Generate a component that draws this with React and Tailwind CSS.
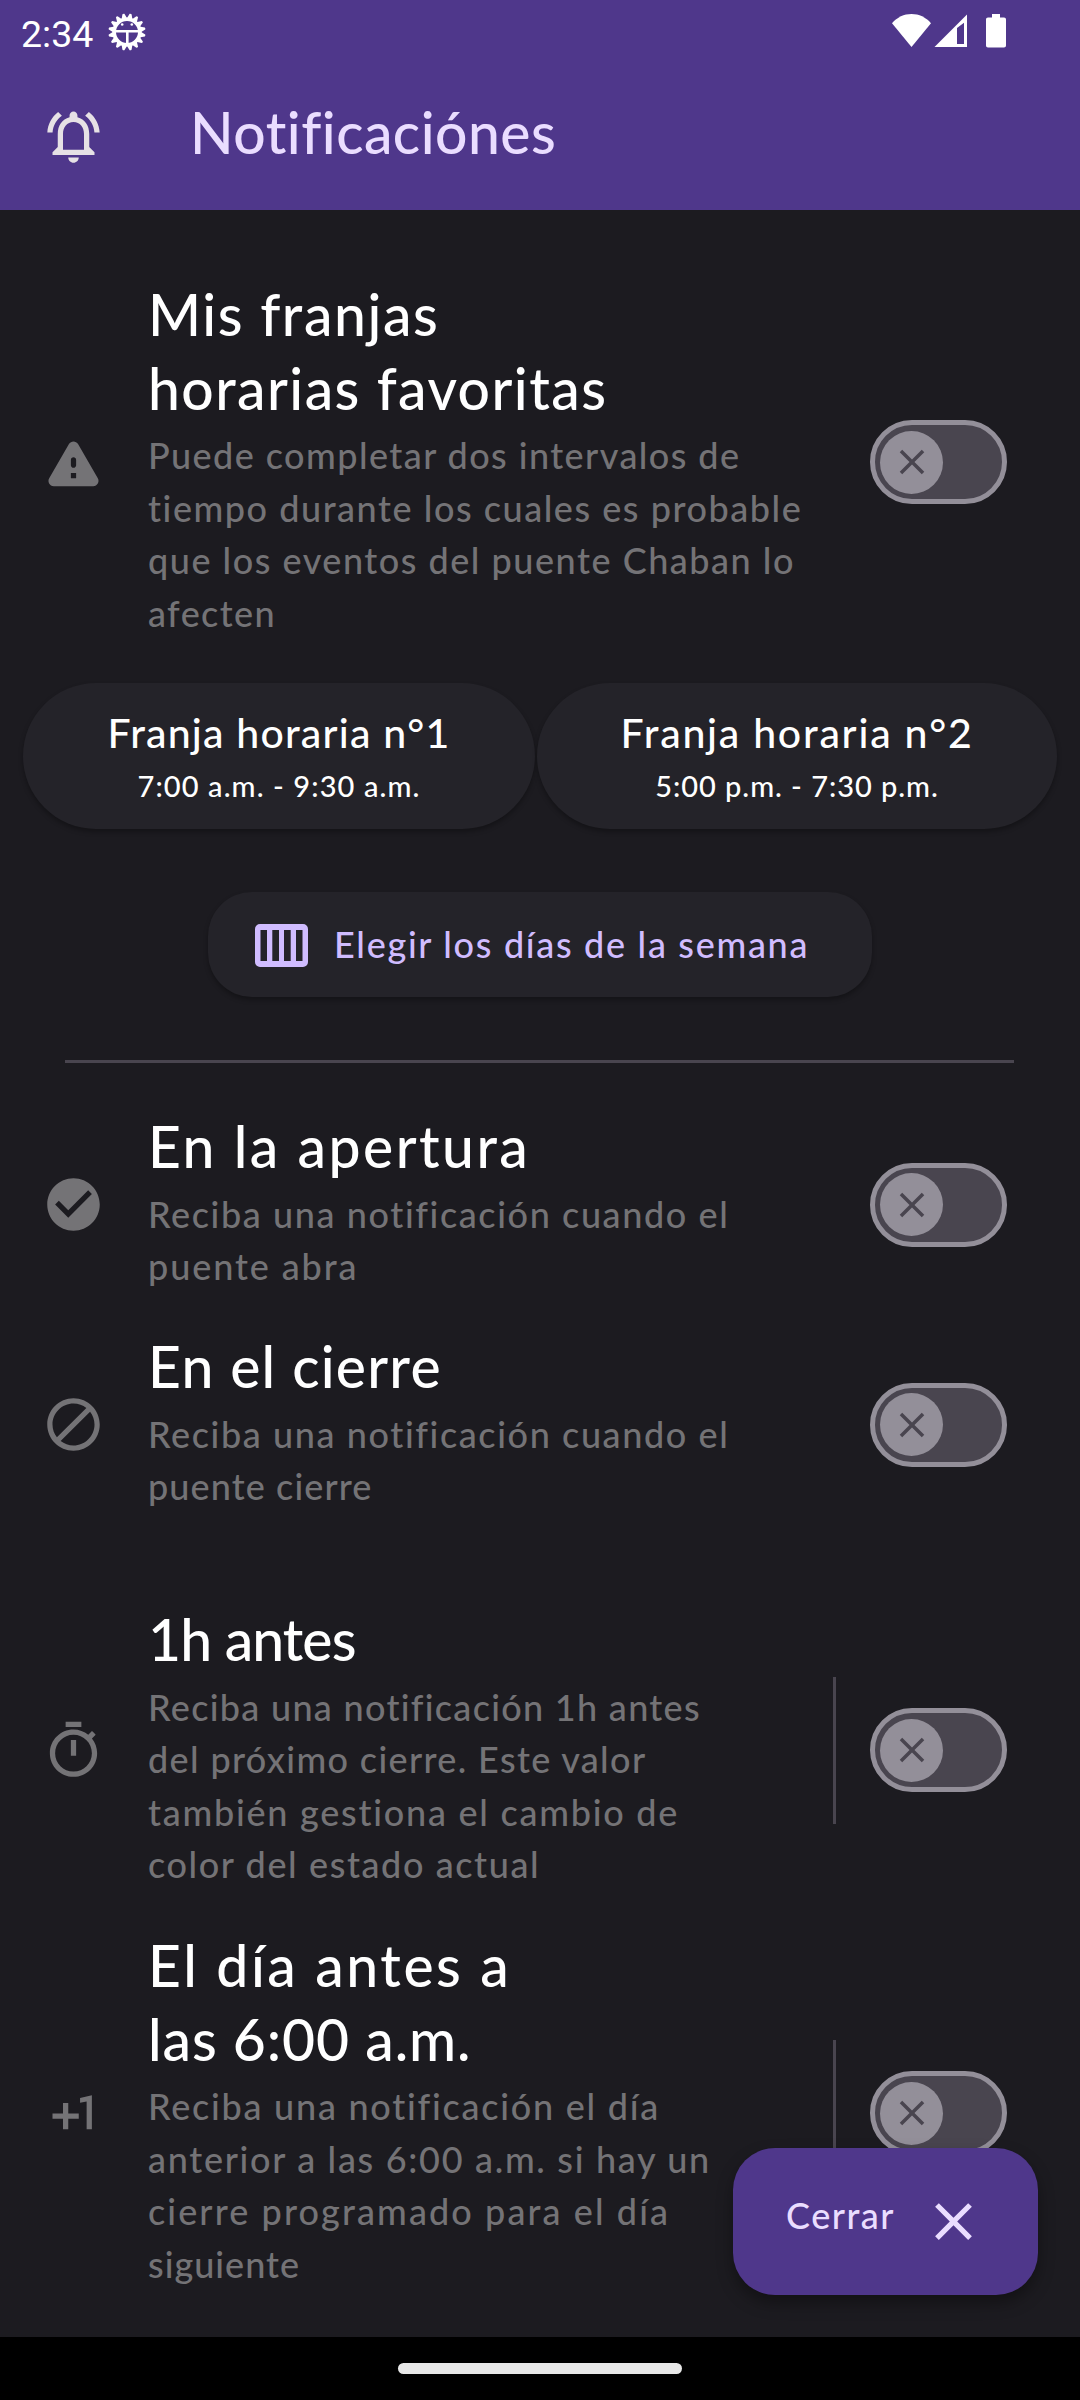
import React from 'react';

const PATHS = {
  bell:
    'M12 22c1.1 0 2-.9 2-2h-4c0 1.1.9 2 2 2zm6-6v-5c0-3.07-1.63-5.64-4.5-6.32V4c0-.83-.67-1.5-1.5-1.5s-1.5.67-1.5 1.5v.68C7.64 5.36 6 7.92 6 11v5l-2 2v1h16v-1l-2-2zm-2 1H8v-6c0-2.48 1.51-4.5 4-4.5s4 2.02 4 4.5v6zM7.58 4.08L6.15 2.65C3.75 4.48 2.17 7.3 2.03 10.5h2c.15-2.65 1.51-4.97 3.55-6.42zm12.39 6.42h2c-.15-3.2-1.73-6.02-4.12-7.85l-1.42 1.43c2.02 1.45 3.39 3.77 3.54 6.42z',
  warning:
    'M4.47 21h15.06c1.54 0 2.5-1.67 1.73-3L13.73 4.99c-.77-1.33-2.69-1.33-3.46 0L2.74 18c-.77 1.33.19 3 1.73 3zM12 14c-.55 0-1-.45-1-1v-2c0-.55.45-1 1-1s1 .45 1 1v2c0 .55-.45 1-1 1zm1 4h-2v-2h2v2z',
  check:
    'M12 2C6.48 2 2 6.48 2 12s4.48 10 10 10 10-4.48 10-10S17.52 2 12 2zm-2 15l-5-5 1.41-1.41L10 14.17l7.59-7.59L19 8l-9 9z',
  block:
    'M12 2C6.48 2 2 6.48 2 12s4.48 10 10 10 10-4.48 10-10S17.52 2 12 2zM4 12c0-4.42 3.58-8 8-8 1.85 0 3.55.63 4.9 1.69L5.69 16.9C4.63 15.55 4 13.85 4 12zm8 8c-1.85 0-3.55-.63-4.9-1.69L18.31 7.1C19.37 8.45 20 10.15 20 12c0 4.42-3.58 8-8 8z',
  timer:
    'M15 1H9v2h6V1zm-4 13h2V8h-2v6zm8.03-6.61l1.42-1.42c-.43-.51-.9-.99-1.41-1.41l-1.42 1.42C16.07 4.74 14.12 4 12 4c-4.97 0-9 4.03-9 9s4.02 9 9 9 9-4.03 9-9c0-2.12-.74-4.07-1.97-5.61zM12 20c-3.87 0-7-3.13-7-7s3.13-7 7-7 7 3.13 7 7-3.13 7-7 7z',
  plusOne: 'M10 8H8v4H4v2h4v4h2v-4h4v-2h-4V8zm4.5-1.92V7.9l2.5-.5V18h2V5l-4.5 1.08z',
  close:
    'M19 6.41L17.59 5 12 10.59 6.41 5 5 6.41 10.59 12 5 17.59 6.41 19 12 13.41 17.59 19 19 17.59 13.41 12 19 6.41z',
};

function Icon({ name, className }) {
  return (
    <svg viewBox="0 0 24 24" fill="currentColor" className={className} aria-hidden="true">
      <path d={PATHS[name]} />
    </svg>
  );
}

function BugGear() {
  return (
    <svg viewBox="0 0 38 38" className="h-[38px] w-[38px]" aria-hidden="true">
      {Array.from({ length: 16 }, (_, i) => (
        <path key={i} d="M16 6 L18 0.6 Q19 0 20 0.6 L22 6z" fill="#fff" transform={`rotate(${i * 22.5 + 11.25} 19 19)`} />
      ))}
      <circle cx="19" cy="19" r="12.8" fill="none" stroke="#fff" strokeWidth="3.6" />
      <path d="M7 18.2h24M19.3 18v14" stroke="#fff" strokeWidth="2.6" />
      <circle cx="14.2" cy="11.5" r="1.3" fill="#fff" />
      <circle cx="23.8" cy="11.5" r="1.3" fill="#fff" />
    </svg>
  );
}

function StatusBar() {
  return (
    <div className="flex h-[63px] items-start pr-[74px] pl-[21px] text-white">
      <span className="mt-[12px] w-[72px] font-[Roboto] text-[37.5px] leading-[44px] font-normal">2:34</span>
      <div className="mt-[13px] ml-[15px]">
        <BugGear />
      </div>
      <svg viewBox="0 0 114 36" className="mt-[13px] ml-auto h-[36px] w-[114px]" fill="#fff" aria-hidden="true">
        <path d="M0 10.2C5.2 4.200 12 1 19.500 1s14.300 3.200 19.500 9.200L19.500 34z" />
        <path fillRule="evenodd" d="M42.500 34 75 1.500V34zM65 14.500V31h7V9.700L65 15z" />
        <path d="M100 1h8v3.500h4c1.200 0 2 .8 2 2v26c0 1.200-.8 2-2 2H96c-1.200 0-2-.8-2-2v-26c0-1.200.8-2 2-2h4z" />
      </svg>
    </div>
  );
}

function Toggle() {
  return (
    <button
      role="switch"
      aria-checked="false"
      className="flex h-[84px] w-[137px] shrink-0 items-center rounded-full border-[5px] border-[#938f99] bg-[#49454f] pl-[5px]"
    >
      <span className="flex h-[63px] w-[63px] items-center justify-center rounded-full bg-[#938f99] text-[#49454f]">
        <Icon name="close" className="h-[42px] w-[42px]" />
      </span>
    </button>
  );
}

function Setting({ icon, title, lines, split, className }) {
  return (
    <div className={`flex items-center pr-[73px] pl-[42px] ${className}`}>
      <Icon name={icon} className="h-[63px] w-[63px] shrink-0 text-[#747376]" />
      <div className="ml-[43px] flex-1 pt-[2px] pb-[9px] whitespace-nowrap">
        <h2 className="text-[57px] leading-[73.5px] text-white">
          {title.map(([text, tracking]) => (
            <span key={text} className={`block ${tracking}`}>{text}</span>
          ))}
        </h2>
        <p className="mt-[4px] text-[36px] leading-[52.5px] text-[#747376]">
          {lines.map(([text, tracking]) => (
            <span key={text} className={`block ${tracking}`}>{text}</span>
          ))}
        </p>
      </div>
      {split && <div className="mr-[34.5px] h-[147px] w-[3px] shrink-0 bg-[#49454f]" />}
      <Toggle />
    </div>
  );
}

function SlotButton({ title, titleClass, time, timeClass, className }) {
  return (
    <button
      className={`flex h-[146px] flex-col items-center rounded-full bg-[#242329] pt-[24px] font-medium whitespace-nowrap text-white shadow-[0_3px_5px_rgba(0,0,0,0.3)] ${className}`}
    >
      <span className={`text-[41px] leading-[52px] ${titleClass}`}>{title}</span>
      <span className={`mt-[6px] text-[29px] leading-[42px] ${timeClass}`}>{time}</span>
    </button>
  );
}

export default function App() {
  return (
    <div className="relative flex h-[2400px] w-[1080px] flex-col overflow-hidden bg-[#1c1b20] font-[Lato,sans-serif] font-medium">
      <header className="h-[210px] shrink-0 bg-[#4f378b]">
        <StatusBar />
        <div className="flex h-[147px] items-center pl-[42px]">
          <Icon name="bell" className="h-[63px] w-[63px] text-[#e6e1e5]" />
          <h1 className="-mt-[10px] ml-[85px] text-[57px] leading-[72px] tracking-[0.5px] text-[#eaddff]">Notificaciónes</h1>
        </div>
      </header>

      <main className="min-h-0 flex-1 overflow-hidden">
        <Setting
          className="mt-[66px]"
          icon="warning"
          title={[
            ['Mis franjas', 'tracking-[1.6px]'],
            ['horarias favoritas', 'tracking-[1.45px]'],
          ]}
          lines={[
            ['Puede completar dos intervalos de', 'tracking-[1.43px]'],
            ['tiempo durante los cuales es probable', 'tracking-[1.54px]'],
            ['que los eventos del puente Chaban lo', 'tracking-[1.52px]'],
            ['afecten', 'tracking-[1.4px]'],
          ]}
        />

        <div className="mt-[35px] flex gap-[2px] pl-[23px]">
          <SlotButton
            className="w-[512px]"
            title="Franja horaria n°1"
            titleClass="tracking-[1.2px]"
            time="7:00 a.m. - 9:30 a.m."
            timeClass="tracking-[1.1px]"
          />
          <SlotButton
            className="w-[520px]"
            title="Franja horaria n°2"
            titleClass="tracking-[1.75px]"
            time="5:00 p.m. - 7:30 p.m."
            timeClass="tracking-[0.95px]"
          />
        </div>

        <button className="mx-auto mt-[63px] flex h-[105px] w-[664px] items-center rounded-[44px] bg-[#242329] pl-[47px] font-medium text-[#d0bcff] shadow-[0_3px_5px_rgba(0,0,0,0.3)]">
          <svg viewBox="0 0 53 43" className="mt-[2px] h-[43px] w-[53px]" fill="currentColor" aria-hidden="true">
            <path
              fillRule="evenodd"
              d="M5 0h43a5 5 0 0 1 5 5v33a5 5 0 0 1-5 5H5a5 5 0 0 1-5-5V5a5 5 0 0 1 5-5zM5.500 6v31h6.500V6zM17.300 6v31H24V6zM29 6v31h6.700V6zM41 6v31h6.500V6z"
            />
          </svg>
          <span className="-mt-[2px] ml-[26px] text-[36px] leading-[52px] tracking-[1.7px] whitespace-nowrap">
            Elegir los días de la semana
          </span>
        </button>

        <div className="mt-[63px] ml-[65px] h-[3px] w-[949px] bg-[#49454f]" />

        <Setting
          className="mt-[45px]"
          icon="check"
          title={[['En la apertura', 'tracking-[2.45px]']]}
          lines={[
            ['Reciba una notificación cuando el', 'tracking-[1.6px]'],
            ['puente abra', 'tracking-[1.9px]'],
          ]}
        />
        <Setting
          className="mt-[26.5px]"
          icon="block"
          title={[['En el cierre', 'tracking-[1.25px]']]}
          lines={[
            ['Reciba una notificación cuando el', 'tracking-[1.6px]'],
            ['puente cierre', 'tracking-[1.1px]'],
          ]}
        />
        <Setting
          className="mt-[79.5px]"
          icon="timer"
          split
          title={[['1h antes', 'tracking-[-0.9px]']]}
          lines={[
            ['Reciba una notificación 1h antes', 'tracking-[1.3px]'],
            ['del próximo cierre. Este valor', 'tracking-[1.35px]'],
            ['también gestiona el cambio de', 'tracking-[1.75px]'],
            ['color del estado actual', 'tracking-[1.6px]'],
          ]}
        />
        <Setting
          className="mt-[27.5px]"
          icon="plusOne"
          split
          title={[
            ['El día antes a', 'tracking-[2.55px]'],
            ['las 6:00 a.m.', 'tracking-[0.9px]'],
          ]}
          lines={[
            ['Reciba una notificación el día', 'tracking-[1.75px]'],
            ['anterior a las 6:00 a.m. si hay un', 'tracking-[1.7px]'],
            ['cierre programado para el día', 'tracking-[2.1px]'],
            ['siguiente', 'tracking-[1px]'],
          ]}
        />
      </main>

      <button className="absolute right-[42px] bottom-[105px] flex h-[147px] w-[305px] items-center rounded-[42px] bg-[#4f378b] pl-[53px] font-medium text-[#eaddff] shadow-[0_8px_16px_rgba(0,0,0,0.35)]">
        <span className="-mt-[14px] text-[36px] leading-[52px] tracking-[1.5px]">Cerrar</span>
        <Icon name="close" className="mr-[53px] ml-auto h-[63px] w-[63px]" />
      </button>

      <nav className="relative flex h-[63px] shrink-0 justify-center bg-black pt-[26px]">
        <div className="h-[11px] w-[284px] rounded-full bg-[#e8e8e8]" />
      </nav>
    </div>
  );
}
